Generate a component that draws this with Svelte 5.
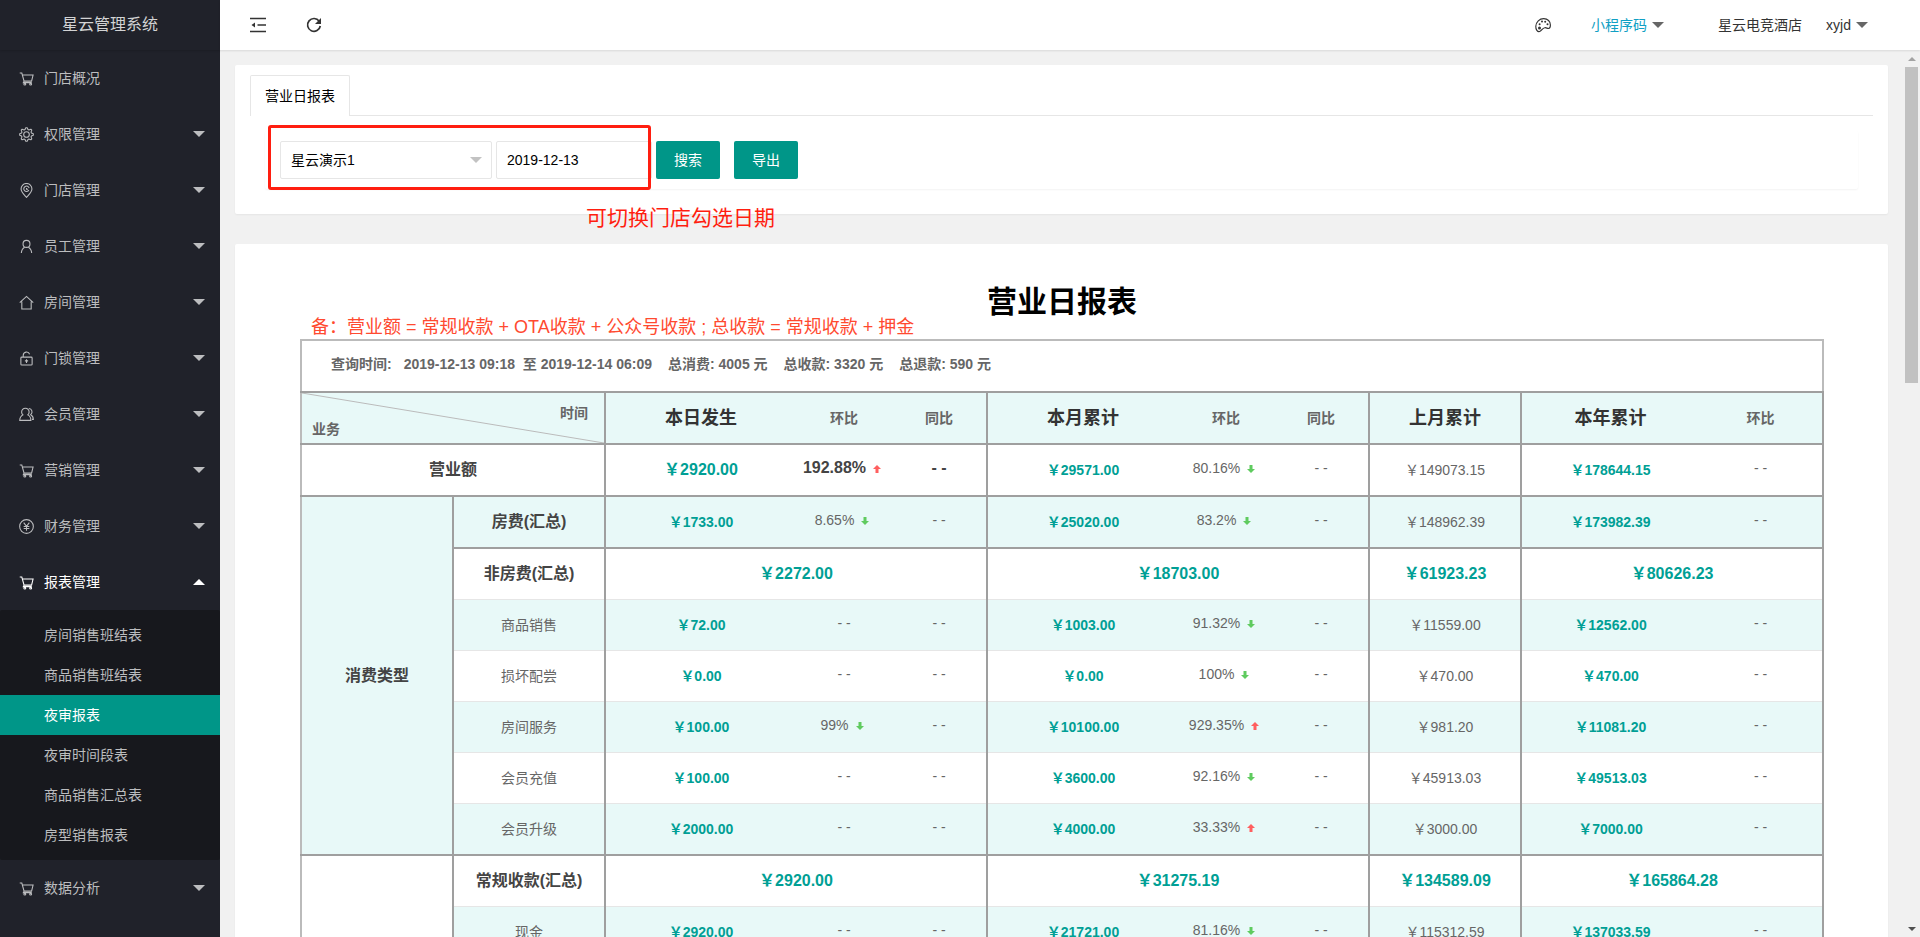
<script>
  const nav = [
    { icon: "cart", label: "门店概况", leaf: true },
    { icon: "gear", label: "权限管理" },
    { icon: "pin", label: "门店管理" },
    { icon: "user", label: "员工管理" },
    { icon: "home", label: "房间管理" },
    { icon: "lock", label: "门锁管理" },
    { icon: "users", label: "会员管理" },
    { icon: "cart", label: "营销管理" },
    { icon: "yen", label: "财务管理" },
    {
      icon: "cart",
      label: "报表管理",
      children: ["房间销售班结表", "商品销售班结表", "夜审报表", "夜审时间段表", "商品销售汇总表", "房型销售报表"],
    },
    { icon: "cart", label: "数据分析" },
  ];

  let opened = $state("报表管理");
  let current = $state("夜审报表");
  let shop = $state("星云演示1");
  let date = $state("2019-12-13");

  // eight-toothed gear outline around (8, 8)
  const gear = Array.from({ length: 32 }, (_, k) => {
    const r = k % 4 < 2 ? 7.3 : 5.5;
    const a = ((k - 0.5) / 32) * 2 * Math.PI;
    return `${(8 + r * Math.cos(a)).toFixed(2)},${(8 + r * Math.sin(a)).toFixed(2)}`;
  }).join(" ");

  const NONE = "- -";
  // full-width yen sign
  const yuan = (amount) => "\uFFE5" + amount;
  // column widths, shared out over the table's full width
  const cols = [152, 152, 191, 96, 95, 191, 96, 95, 152, 178, 124];

  // ratios: [text, direction]; a plain string has no arrow
  const rows = [
    { label: "营业额", wide: true, strong: true, end: true, day: ["2920.00", ["192.88%", "up"], NONE], month: ["29571.00", ["80.16%", "down"], NONE], last: "149073.15", year: ["178644.15", NONE] },
    { group: "消费类型", span: 7, label: "房费(汇总)", strong: true, end: true, day: ["1733.00", ["8.65%", "down"], NONE], month: ["25020.00", ["83.2%", "down"], NONE], last: "148962.39", year: ["173982.39", NONE] },
    { label: "非房费(汇总)", strong: true, sum: ["2272.00", "18703.00", "61923.23", "80626.23"] },
    { label: "商品销售", day: ["72.00", NONE, NONE], month: ["1003.00", ["91.32%", "down"], NONE], last: "11559.00", year: ["12562.00", NONE] },
    { label: "损坏配尝", day: ["0.00", NONE, NONE], month: ["0.00", ["100%", "down"], NONE], last: "470.00", year: ["470.00", NONE] },
    { label: "房间服务", day: ["100.00", ["99%", "down"], NONE], month: ["10100.00", ["929.35%", "up"], NONE], last: "981.20", year: ["11081.20", NONE] },
    { label: "会员充值", day: ["100.00", NONE, NONE], month: ["3600.00", ["92.16%", "down"], NONE], last: "45913.03", year: ["49513.03", NONE] },
    { label: "会员升级", end: true, day: ["2000.00", NONE, NONE], month: ["4000.00", ["33.33%", "up"], NONE], last: "3000.00", year: ["7000.00", NONE] },
    { group: "", span: 2, label: "常规收款(汇总)", strong: true, sum: ["2920.00", "31275.19", "134589.09", "165864.28"] },
    { label: "现金", day: ["2920.00", NONE, NONE], month: ["21721.00", ["81.16%", "down"], NONE], last: "115312.59", year: ["137033.59", NONE] },
  ];
</script>

{#snippet icon(name)}
  <svg class="icon" viewBox="0 0 16 16" aria-hidden="true">
    {#if name === "cart"}
      <path d="M.8 2.200h2.200l2.400 8.600h8L15 4.300H4M5.400 10.800l-.8 1.600h9" />
      <circle cx="6.200" cy="14" r="1" /><circle cx="12.400" cy="14" r="1" />
    {:else if name === "gear"}
      <polygon points={gear} stroke-linejoin="round" />
      <circle cx="8" cy="8" r="3" />
    {:else if name === "pin"}
      <path d="M8 15.400C4.500 11.500 2.200 9.300 2.200 6.300a5.800 5.800 0 0 1 11.600 0c0 3-2.300 5.200-5.800 9.100z" />
      <path d="M10.500 7.600A2.900 2.900 0 1 1 10.800 5.500M8 5.200v1.500h1.600" />
    {:else if name === "user"}
      <circle cx="8" cy="5.200" r="3.700" /><path d="M2.500 15c.2-3.200 1.400-5.200 3.500-6.300M13.500 15c-.2-3.200-1.400-5.200-3.500-6.300" />
    {:else if name === "home"}
      <path d="M.8 8.200 8 1.500l7.200 6.700M3 6.800V15h10V6.800" />
    {:else if name === "lock"}
      <rect x="2" y="6.500" width="12" height="8.500" rx="1" />
      <path d="M4.500 6.500V4.500a3.500 3.500 0 0 1 6.800-1M8 8.700v4M6.300 10.500h3.400" />
    {:else if name === "users"}
      <path d="M4.200 8.400a4 4 0 1 1 5.200 0c2.300 1.200 3.300 2.600 3.300 5.900H.8c0-3.300 1.100-4.700 3.400-5.900zM10.500 1.600a3.700 3.700 0 0 1 2 6.600c1.800 1 2.800 2.300 2.800 5h-1.400" />
    {:else if name === "yen"}
      <circle cx="8" cy="8" r="7.300" /><path d="M5 3.800l3 4 3-4M8 7.800v4.700M5 8h6M5 10.200h6" />
    {:else if name === "fold"}
      <path d="M0 1.500h16M7.500 8H16M0 14.500h16" stroke-width="1.500" /><path d="M5 5.500v5L1.500 8z" class="solid" />
    {:else if name === "refresh"}
      <path d="M13.200 4.200A6.400 6.400 0 1 0 14.300 9" stroke-width="1.700" /><path d="M15 1v6H9z" class="solid" />
    {:else if name === "palette"}
      <path d="M4.700 14.500C2.500 15.200.6 12.500.8 9.300 1.100 5 4.400 1.700 8.700 1.700c4 0 6.700 2.700 6.700 6.300 0 2.300-.7 3.400-1.900 3.500-1.400.1-1.900-1-3.700-.8-2.700.3-2.900 3.200-5.100 3.800z" />
      <g class="solid"><circle cx="4.600" cy="7.200" r="1" /><circle cx="7" cy="4.600" r="1" /><circle cx="10.200" cy="4.700" r="1" /><circle cx="12.500" cy="7.300" r="1" /><circle cx="4.500" cy="11" r="1.500" /></g>
    {/if}
  </svg>
{/snippet}

{#snippet ratio(value, edge)}
  <td class="ratio" class:edge>
    {#if Array.isArray(value)}
      {value[0]}
      <svg class={`arrow ${value[1]}`} viewBox="0 0 8 8" role="img" aria-label={value[1]}>
        <path d="M4 0l4 4H5.500v4h-3V4H0z" />
      </svg>
    {:else}
      {value}
    {/if}
  </td>
{/snippet}

<div class="layout">
  <aside>
    <div class="logo">星云管理系统</div>
    <nav>
      {#each nav as item}
        {@const open = opened === item.label && item.children}
        <button class="item" class:open onclick={() => (opened = open ? "" : item.label)}>
          {@render icon(item.icon)}
          <span>{item.label}</span>
          {#if !item.leaf}<i class="caret"></i>{/if}
        </button>
        {#if open}
          <div class="sub">
            {#each item.children as child}
              <a href="#report" class:active={current === child} onclick={() => (current = child)}>{child}</a>
            {/each}
          </div>
        {/if}
      {/each}
    </nav>
  </aside>

  <div class="page">
    <header>
      <button class="tool" aria-label="收起菜单">{@render icon("fold")}</button>
      <button class="tool" aria-label="刷新">{@render icon("refresh")}</button>
      <div class="right">
        <button class="tool" aria-label="主题">{@render icon("palette")}</button>
        <button class="menu code">小程序码<i class="caret"></i></button>
        <span class="hotel">星云电竞酒店</span>
        <button class="menu">xyjd<i class="caret"></i></button>
      </div>
    </header>

    <div class="body">
      <main>
        <section class="card filter">
          <div class="tabs"><button class="tab">营业日报表</button></div>
          <form onsubmit={(e) => e.preventDefault()}>
            <div class="pick">
              <select aria-label="门店" bind:value={shop}><option>星云演示1</option></select>
              <i class="caret"></i>
            </div>
            <input type="text" aria-label="日期" bind:value={date} />
            <button class="btn">搜索</button>
            <button class="btn export" type="button">导出</button>
            <div class="frame"></div>
            <p class="tip">可切换门店勾选日期</p>
          </form>
        </section>

        <section class="card report" id="report">
          <div class="head">
            <h1>营业日报表</h1>
            <p class="note">备：营业额 = 常规收款 + OTA收款 + 公众号收款 ; 总收款 = 常规收款 + 押金</p>
          </div>
          <table>
            <colgroup>
              {#each cols as w}<col style={`width: ${w}px`} />{/each}
            </colgroup>
            <thead>
              <tr class="info end">
                <td colspan="11">
                  <div class="facts">
                    <span>查询时间:</span>
                    <span>2019-12-13 09:18 &nbsp;至 2019-12-14 06:09</span>
                    <span class="total">总消费: 4005 元</span>
                    <span class="total">总收款: 3320 元</span>
                    <span class="total">总退款: 590 元</span>
                  </div>
                </td>
              </tr>
              <tr class="titles end">
                <th colspan="2" class="corner edge">
                  <svg viewBox="0 0 100 100" preserveAspectRatio="none" aria-hidden="true"><path d="M0 0L100 100" /></svg>
                  <span class="time">时间</span>
                  <span class="kind">业务</span>
                </th>
                <th class="big">本日发生</th><th>环比</th><th class="edge">同比</th>
                <th class="big">本月累计</th><th>环比</th><th class="edge">同比</th>
                <th class="big edge">上月累计</th>
                <th class="big">本年累计</th><th class="edge">环比</th>
              </tr>
            </thead>
            <tbody>
              {#each rows as r, i}
                <tr class:end={r.end} class:tint={i % 2 === 1} class:first={r.wide}>
                  {#if r.span}
                    <th rowspan={r.span} class="strong edge group" class:shade={r.group}>{r.group}</th>
                  {/if}
                  <th colspan={r.wide ? 2 : 1} class="edge" class:strong={r.strong}>{r.label}</th>
                  {#if r.sum}
                    <td colspan="3" class="money large edge">{yuan(r.sum[0])}</td>
                    <td colspan="3" class="money large edge">{yuan(r.sum[1])}</td>
                    <td class="money large edge">{yuan(r.sum[2])}</td>
                    <td colspan="2" class="money large edge">{yuan(r.sum[3])}</td>
                  {:else}
                    <td class="money" class:large={r.wide}>{yuan(r.day[0])}</td>
                    {@render ratio(r.day[1], false)}
                    {@render ratio(r.day[2], true)}
                    <td class="money">{yuan(r.month[0])}</td>
                    {@render ratio(r.month[1], false)}
                    {@render ratio(r.month[2], true)}
                    <td class="edge">{yuan(r.last)}</td>
                    <td class="money">{yuan(r.year[0])}</td>
                    {@render ratio(r.year[1], true)}
                  {/if}
                </tr>
              {/each}
            </tbody>
          </table>
        </section>
      </main>
      <div class="scrollbar" aria-hidden="true">
        <i class="up"></i>
        <div class="track"><div class="thumb"></div></div>
        <i class="down"></i>
      </div>
    </div>
  </div>
</div>

<style>
  :global(body) { margin: 0; }
  .layout { display: flex; height: 100vh; overflow: hidden; background: #f1f1f1; color: #333; font: 14px/24px "Liberation Sans", "Noto Sans CJK SC", sans-serif; }
  .layout :is(button, input, select) { font: inherit; color: inherit; margin: 0; padding: 0; border: 0; background: none; box-sizing: border-box; }
  button { cursor: pointer; }
  p, h1 { margin: 0; }
  .icon { width: 15px; height: 15px; fill: none; stroke: currentColor; stroke-width: 1.15; flex: none; }
  .icon .solid { fill: currentColor; stroke: none; }
  .caret { width: 0; height: 0; border: 6px solid transparent; border-top-color: currentColor; border-bottom-width: 0; }

  aside { width: 220px; flex: none; background: #20222a; color: #bcbdbf; }
  .logo { height: 50px; line-height: 50px; text-align: center; font-size: 16px; color: #d2d3d4; box-shadow: 0 1px 2px rgba(0, 0, 0, 0.15); }
  .item { display: flex; align-items: center; width: 100%; height: 56px; }
  .layout .item { padding: 0 15px 0 19px; gap: 10px; }
  .item .caret { margin-left: auto; }
  .layout .item.open { color: #fff; }
  .item.open .caret { transform: rotate(180deg); }
  .sub { padding: 5px 0; background: #17181d; border-radius: 2px; }
  .sub a { display: block; padding-left: 44px; line-height: 40px; color: #bcbdbf; text-decoration: none; }
  .sub a.active { background: #009688; color: #fff; }

  .page { flex: 1; min-width: 0; display: flex; flex-direction: column; }
  header { display: flex; align-items: center; height: 50px; padding: 0 52px 0 30px; background: #fff; box-shadow: 0 1px 2px rgba(0, 0, 0, 0.1); z-index: 1; }
  .tool { display: flex; align-items: center; }
  .tool .icon { width: 16px; height: 16px; }
  .layout .tool + .tool { margin-left: 40px; }
  .right { display: flex; align-items: center; margin-left: auto; }
  .menu { display: flex; align-items: center; gap: 5px; }
  .menu .caret { border-top-color: #666; }
  .layout .menu.code { color: #10a0c4; margin-left: 40px; }
  .hotel { margin: 0 24px 0 54px; }

  .body { flex: 1; min-height: 0; display: flex; }
  main { flex: 1; min-width: 0; padding: 15px; overflow: hidden; }
  .card { background: #fff; border-radius: 2px; box-shadow: 0 1px 2px rgba(0, 0, 0, 0.05); }
  .filter { padding: 10px 15px 25px; margin-bottom: 30px; }
  .tabs { display: flex; height: 41px; box-sizing: border-box; border-bottom: 1px solid #e6e6e6; }
  .layout .tab { height: 41px; padding: 0 14px; color: #000; background: #fff; border: 1px solid #e6e6e6; border-bottom: 0; border-radius: 2px 2px 0 0; }
  form { position: relative; display: flex; gap: 4px; margin: 15px 15px 0; padding: 10px 15px; border-radius: 2px; box-shadow: 0 1px 2px rgba(0, 0, 0, 0.05); color: #000; }
  .pick { position: relative; width: 212px; }
  .layout :is(select, input) { width: 100%; height: 38px; padding: 0 10px; border: 1px solid #e6e6e6; border-radius: 2px; background: #fff; appearance: none; }
  .layout input { width: 156px; }
  .pick .caret { position: absolute; right: 10px; top: 16px; border-top-color: #c2c2c2; pointer-events: none; }
  .layout .btn { width: 64px; height: 38px; border-radius: 2px; background: #009688; color: #fff; }
  .layout .export { margin-left: 10px; }
  .frame { position: absolute; left: 3px; top: -6px; width: 383px; height: 65px; box-sizing: border-box; border: 3px solid #ff1e10; border-radius: 3px; pointer-events: none; }
  .tip { position: absolute; left: 321px; top: 73px; font-size: 21px; line-height: 28px; color: #ff1e10; white-space: nowrap; }

  .report { padding: 36px 64px 60px 65px; }
  .head { position: relative; padding-bottom: 15px; text-align: center; }
  h1 { font-size: 30px; line-height: 44px; color: #000; }
  .note { position: absolute; left: 11px; bottom: 0; font-size: 18px; line-height: 24px; color: #ff4a30; white-space: nowrap; }

  table { width: 100%; table-layout: fixed; border-collapse: collapse; border: 2px solid #bbb; color: #666; text-align: center; }
  td, th { height: 50px; padding: 0; font-weight: 400; line-height: 20px; border-bottom: 1px solid #e6e6e6; }
  .end > :is(td, th), .group { border-bottom: 2px solid #9f9f9f; }
  .edge { border-right: 2px solid #9f9f9f; }
  .facts { display: flex; padding: 0 29px 4px; font-weight: 700; white-space: nowrap; }
  .facts span + span { margin-left: 12px; }
  .facts span + .total { margin-left: 16px; }
  .titles, .tint, .shade { background: #e8f9f8; }
  .titles th { font-weight: 700; }
  .titles .big { font-size: 18px; color: #333; }
  .corner { position: relative; }
  .corner svg { position: absolute; inset: 0; width: 100%; height: 100%; }
  .corner path { stroke: #bbb; stroke-width: 1; vector-effect: non-scaling-stroke; }
  .corner span { position: absolute; }
  .time { right: 16px; top: 10px; }
  .kind { left: 10px; bottom: 4px; }
  .strong { font-size: 16px; font-weight: 700; color: #444; }
  .group { background: #fff; }
  .group.shade { background: #e8f9f8; }
  .money { color: #009f95; font-weight: 700; }
  .large { font-size: 16px; }
  td.ratio { height: 46px; padding-bottom: 4px; }
  .first td:nth-child(3), .first td:nth-child(4) { font-size: 16px; font-weight: 700; color: #444; }
  .arrow { width: 8px; height: 8px; margin: 0 4px 0 7px; fill: #5fcb5f; }
  .arrow.up { fill: #ff5f5f; }
  .arrow.down { transform: rotate(180deg); }

  .scrollbar { display: flex; flex-direction: column; align-items: center; width: 17px; background: #f1f1f1; }
  .scrollbar i { width: 0; height: 0; margin: 7px 0 6px; border: 4px solid transparent; }
  .scrollbar .up { border-top: 0; border-bottom-color: #a3a3a3; }
  .scrollbar .down { border-bottom: 0; border-top-color: #505050; }
  .track { flex: 1; width: 13px; }
  .thumb { height: 37%; background: #c1c1c1; }
</style>
